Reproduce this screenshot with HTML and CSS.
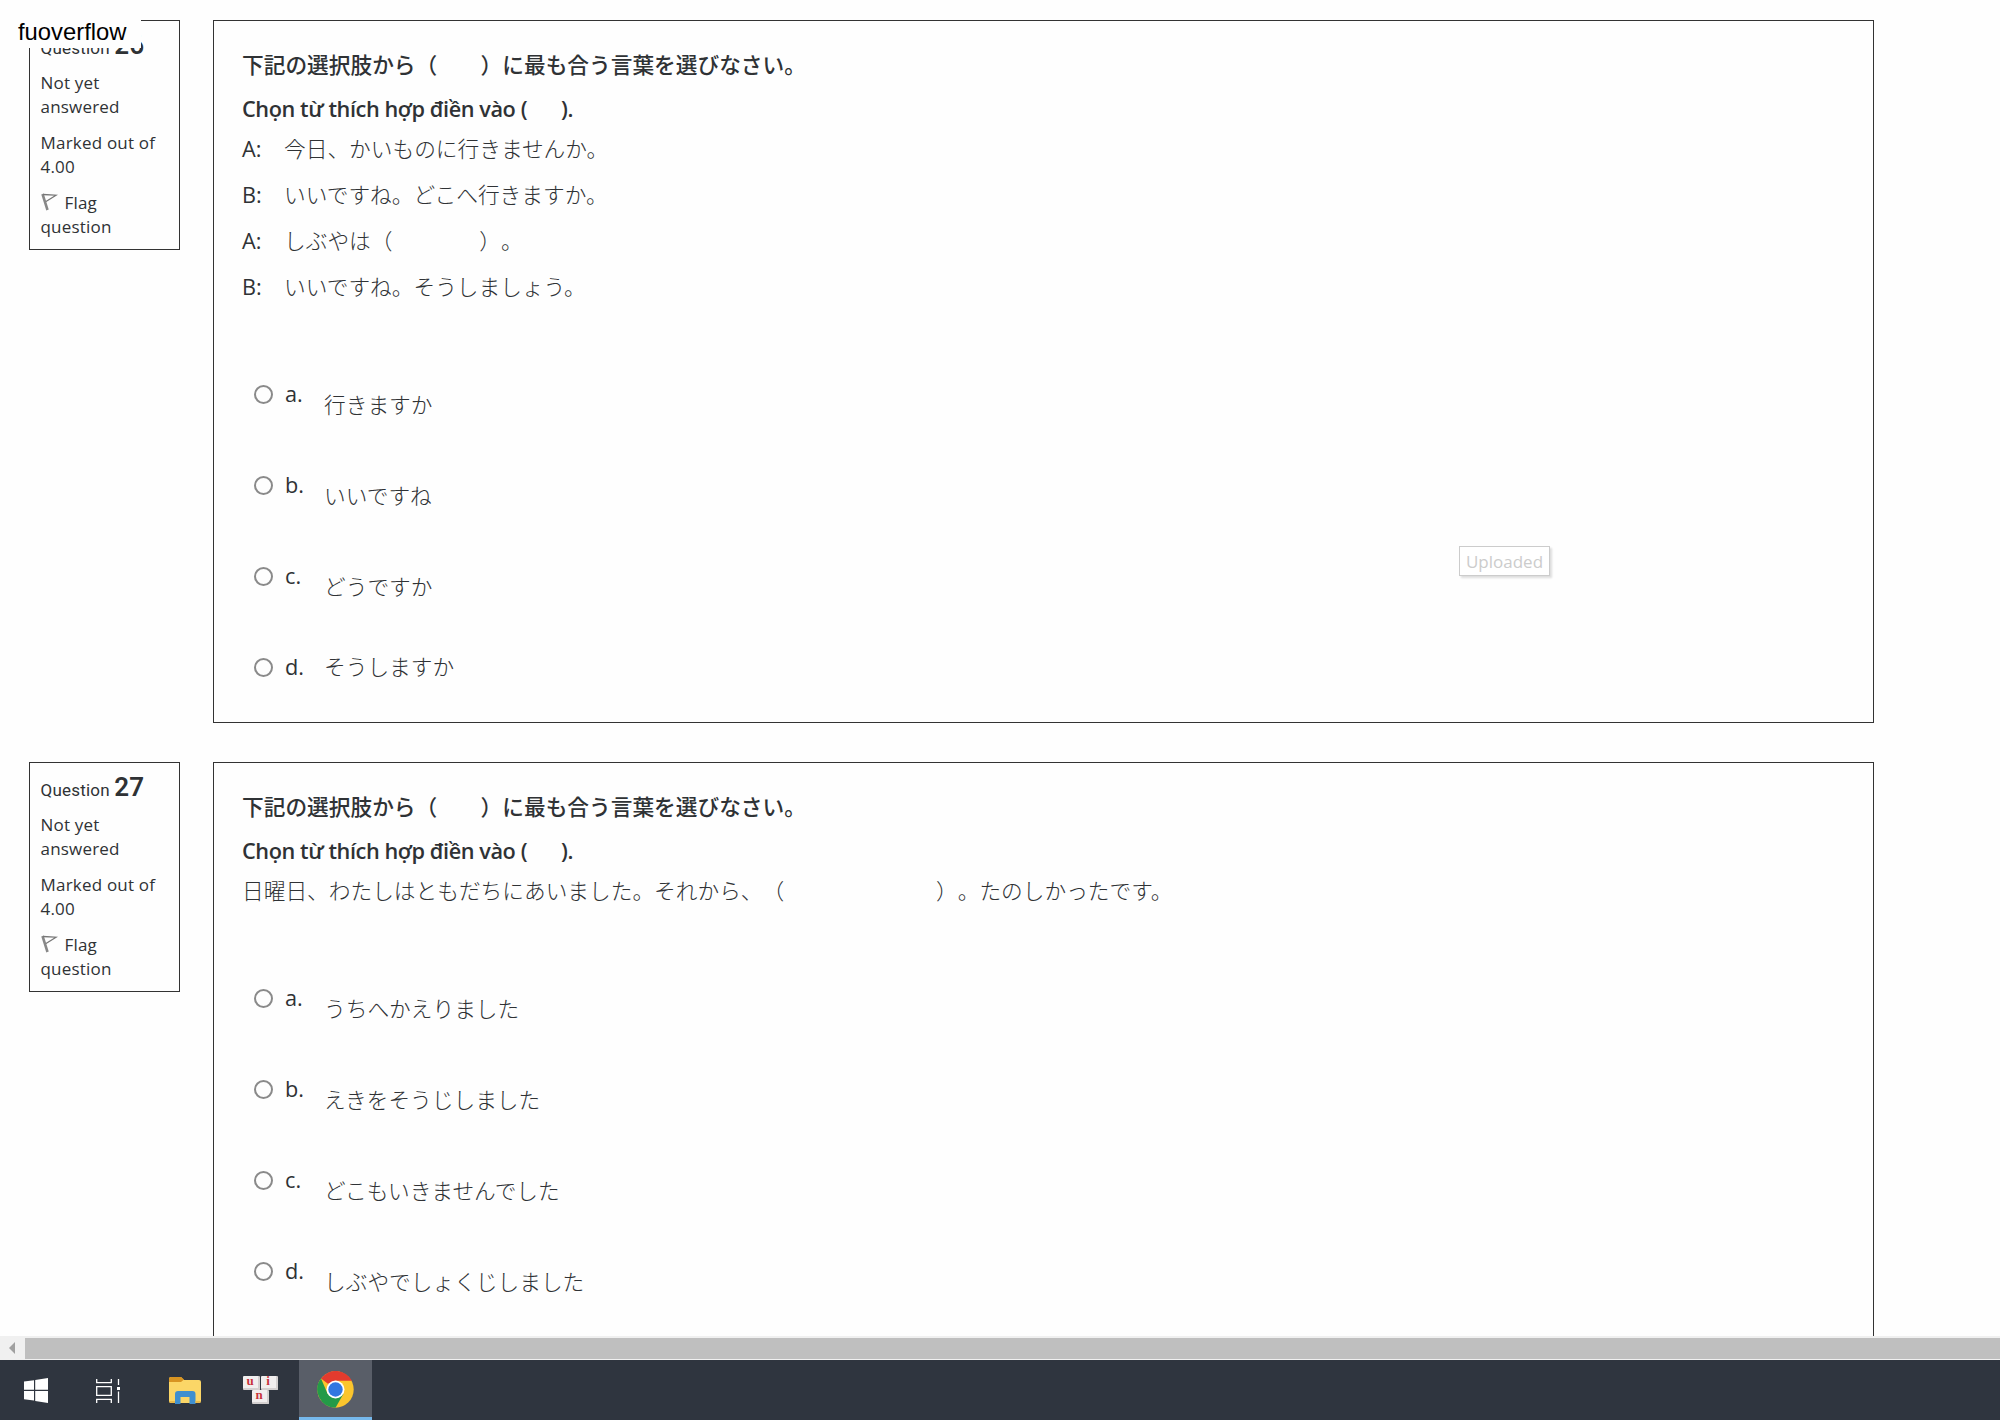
FILE: index.html
```html
<!DOCTYPE html>
<html lang="ja">
<head>
  <meta charset="UTF-8" />
  <meta name="viewport" content="width=device-width, initial-scale=1.0"/>
  <title>Quiz</title>
  <link rel="stylesheet" href="styles.css">
</head>
<body>

  <div class="page">
    <!-- Question 26 -->
    <div class="question">
      <div class="info">
        <h3 class="number">Question <b>26</b></h3>
        <p>Not yet<br>answered</p>
        <p class="grade">Marked out of<br>4.00</p>
        <p class="flag"><svg width="17" height="18" viewBox="0 0 17 18"><path d="M1.500 1 6.500 17" stroke="#888" stroke-width="2.600"/><path d="M2 1.500 15 2.200 5 8.500" fill="none" stroke="#777" stroke-width="1.300"/></svg>Flag<br>question</p>
      </div>
      <div class="content">
        <p class="title">下記の選択肢から（　　）に最も合う言葉を選びなさい。</p>
        <p class="subtitle">Chọn từ thích hợp điền vào (<span class="blank"></span>).</p>
        <div class="dialog">
          <p><span class="who">A:</span>今日、かいものに行きませんか。</p>
          <p><span class="who">B:</span>いいですね。どこへ行きますか。</p>
          <p><span class="who">A:</span>しぶやは（　　　　）。</p>
          <p><span class="who">B:</span>いいですね。そうしましょう。</p>
        </div>
        <div class="answers">
          <label><input type="radio" name="q26"><span class="letter">a.</span><span class="text">行きますか</span></label>
          <label><input type="radio" name="q26"><span class="letter">b.</span><span class="text">いいですね</span></label>
          <label><input type="radio" name="q26"><span class="letter">c.</span><span class="text">どうですか</span></label>
          <label><input type="radio" name="q26"><span class="letter">d.</span><span class="text flat">そうしますか</span></label>
        </div>
      </div>
    </div>

    <!-- Question 27 -->
    <div class="question">
      <div class="info">
        <h3 class="number">Question <b>27</b></h3>
        <p>Not yet<br>answered</p>
        <p class="grade">Marked out of<br>4.00</p>
        <p class="flag"><svg width="17" height="18" viewBox="0 0 17 18"><path d="M1.500 1 6.500 17" stroke="#888" stroke-width="2.600"/><path d="M2 1.500 15 2.200 5 8.500" fill="none" stroke="#777" stroke-width="1.300"/></svg>Flag<br>question</p>
      </div>
      <div class="content">
        <p class="title">下記の選択肢から（　　）に最も合う言葉を選びなさい。</p>
        <p class="subtitle">Chọn từ thích hợp điền vào (<span class="blank"></span>).</p>
        <div class="dialog">
          <p>日曜日、わたしはともだちにあいました。それから、（　　　　　　　）。たのしかったです。</p>
        </div>
        <div class="answers">
          <label><input type="radio" name="q27"><span class="letter">a.</span><span class="text">うちへかえりました</span></label>
          <label><input type="radio" name="q27"><span class="letter">b.</span><span class="text">えきをそうじしました</span></label>
          <label><input type="radio" name="q27"><span class="letter">c.</span><span class="text">どこもいきませんでした</span></label>
          <label><input type="radio" name="q27"><span class="letter">d.</span><span class="text">しぶやでしょくじしました</span></label>
        </div>
      </div>
    </div>
  </div>

  <div class="brand">fuoverflow</div>
  <div class="tooltip">Uploaded</div>

  <!-- Scrollbar -->
  <div class="scrollbar">
    <div class="arrow"><svg width="6" height="12" viewBox="0 0 6 12"><path d="M6 0v12L0 6z" fill="#a0a0a0"/></svg></div>
    <div class="thumb"></div>
  </div>

  <!-- Taskbar -->
  <div class="taskbar">
    <div class="task start">
      <svg width="24" height="25" viewBox="0 0 24 25"><path d="M0 3.6 10 2.2V11.800H0zM11.200 2 24 0V11.800H11.200zM0 13H10V22.600L0 21.200zM11.200 13H24V25L11.200 23z" fill="#fff"/></svg>
    </div>
    <div class="task view">
      <svg width="25" height="25" viewBox="0 0 25 25" fill="none" stroke="#fff" stroke-width="1.300"><path d="M.7 1V4.700H15.300V1M.7 8.700H15.300V17.300H.7zM.7 25V21.300H15.300V25M22.500 1V7M22.500 13.500V25"/><path d="M21 9h3v3h-3z" fill="#fff" stroke="none"/></svg>
    </div>
    <div class="task files">
      <svg width="32" height="27" viewBox="0 0 32 27"><path d="M0 2Q0 0 2 0H12L15 3H30Q32 3 32 5V24Q32 26 30 26H2Q0 26 0 24z" fill="#fbd667"/><path d="M0 5V2Q0 0 2 0H12L15 2.500 12 5z" fill="#d89422"/><path d="M6 27V17Q6 14 9 14H23.500Q26.500 14 26.500 17V27H20.500V20H11.500V27z" fill="#3f8fcf"/><path d="M0 24H6V26H2Q0 26 0 24zM26.500 24H32Q32 26 30 26H26.500z" fill="#e9b949"/></svg>
    </div>
    <div class="task keys">
      <div class="key-row"><span class="key">u</span><span class="key">i</span></div>
      <div class="key-row"><span class="key">n</span></div>
    </div>
    <div class="task chrome">
      <svg width="37" height="37" viewBox="0 0 37 37"><circle cx="18.500" cy="18.500" r="18.200" fill="#fbc52d"/><path d="M18.500 18.500 4 7.500A18.200 18.200 0 0 1 34.900 9.700H18.500z" fill="#e33b2e"/><path d="M4 7.500A18.200 18.200 0 0 0 18.500 36.700L26.500 22.800 10.600 22.800z" fill="#249a48"/><circle cx="18.500" cy="18.500" r="9" fill="#fff"/><circle cx="18.500" cy="18.500" r="7.200" fill="#3177e0"/></svg>
    </div>
  </div>

</body>
</html>
```
FILE: styles.css
```css
* {
  box-sizing: border-box;
}
body {
  margin: 0;
  height: 1420px;
  overflow: hidden;
  background: #fefefe;
  color: #2f3235;
  font-family: 'Open Sans', 'Noto Sans CJK JP', sans-serif;
  text-spacing-trim: space-all;
  display: flex;
  flex-direction: column;
}
p, h3 {
  margin: 0;
}

/* Questions */
.page {
  height: 1336px;
  padding: 20px 126px 0 29px;
  overflow: hidden;
}

.question {
  display: flex;
  align-items: flex-start;
  gap: 33px;
  margin-bottom: 39px;
}

.info {
  width: 151px;
  height: 230px;
  padding: 10px 0 0 10.5px;
  border: 1px solid #333;
  font-size: 17px;
  letter-spacing: 0.2px;
  line-height: 24px;
}

.info p {
  margin-bottom: 12px;
}

.number {
  height: 40px;
  font-family: Roboto, sans-serif;
  font-size: 17px;
  font-weight: 400;
  line-height: 28px;
}

.number b {
  font-size: 26px;
  font-weight: 600;
}

.flag svg {
  margin-right: 7px;
  vertical-align: -2px;
}

.content {
  flex: 1;
  height: 703px;
  padding: 27px 28px 0;
  border: 1px solid #333;
  font-size: 21.7px;
}

.title {
  height: 45px;
  font-family: 'Noto Sans CJK JP', sans-serif;
  font-weight: 500;
  line-height: 32px;
}

.subtitle {
  height: 33px;
  font-weight: 600;
  letter-spacing: -0.42px;
  line-height: 32px;
}

.blank {
  display: inline-block;
  width: 34px;
}

.dialog {
  font-weight: 300;
  line-height: 46px;
}

.who {
  display: inline-block;
  width: 42px;
  font-weight: 400;
}

.answers {
  margin-top: 67.5px;
}

.answers label {
  display: flex;
  align-items: flex-start;
  height: 91.3px;
  padding-left: 12px;
  line-height: 32px;
}

.answers input {
  appearance: none;
  width: 19px;
  height: 19px;
  margin: 7px 12px 0 0;
  border: 2px solid #8a8a8a;
  border-radius: 50%;
}

.letter {
  width: 39px;
}

.text {
  padding-top: 11px;
  font-weight: 300;
}

.text.flat {
  padding-top: 0;
}

/* Overlays */
.brand {
  position: absolute;
  left: 0;
  top: 0;
  width: 141px;
  height: 48px;
  padding: 17px 0 0 18px;
  background: #fefefe;
  color: #000;
  font-family: 'Liberation Sans', sans-serif;
  font-size: 23.8px;
  line-height: 30px;
}

.tooltip {
  position: absolute;
  left: 1459px;
  top: 546px;
  width: 91px;
  height: 30px;
  border: 1px solid #ccc;
  background: #fff;
  box-shadow: 2px 2px 2px #ddd;
  color: #ccc;
  font-size: 17px;
  line-height: 29px;
  text-align: center;
}

/* Scrollbar */
.scrollbar {
  display: flex;
  height: 24px;
  padding: 2px 0 1px;
  background: #f0f0f0;
}

.arrow {
  width: 25px;
  padding: 1px 0 0 9px;
  line-height: 19px;
}

.thumb {
  flex: 1;
  background: #bfbfbf;
}

/* Taskbar */
.taskbar {
  display: flex;
  height: 60px;
  background: #2f353f;
}

.task {
  display: flex;
  align-items: center;
  justify-content: center;
  width: 74px;
}

.start {
  width: 72px;
}

.view {
  width: 72px;
}

.files {
  width: 82px;
}

.keys {
  width: 73px;
  flex-direction: column;
  padding-right: 5px;
}

.key-row {
  display: flex;
  gap: 1px;
}

.key {
  width: 17px;
  height: 14px;
  background: #f1eeee;
  border-right: 2px solid #d4d0d0;
  border-bottom: 2px solid #d4d0d0;
  border-radius: 1px;
  color: #c8343c;
  font-family: 'Liberation Serif', serif;
  font-size: 13px;
  font-weight: bold;
  line-height: 10px;
  text-align: center;
}

.chrome {
  width: 73px;
  padding-top: 2px;
  background: #595e68;
  border-bottom: 3px solid #76b9ed;
}
```
